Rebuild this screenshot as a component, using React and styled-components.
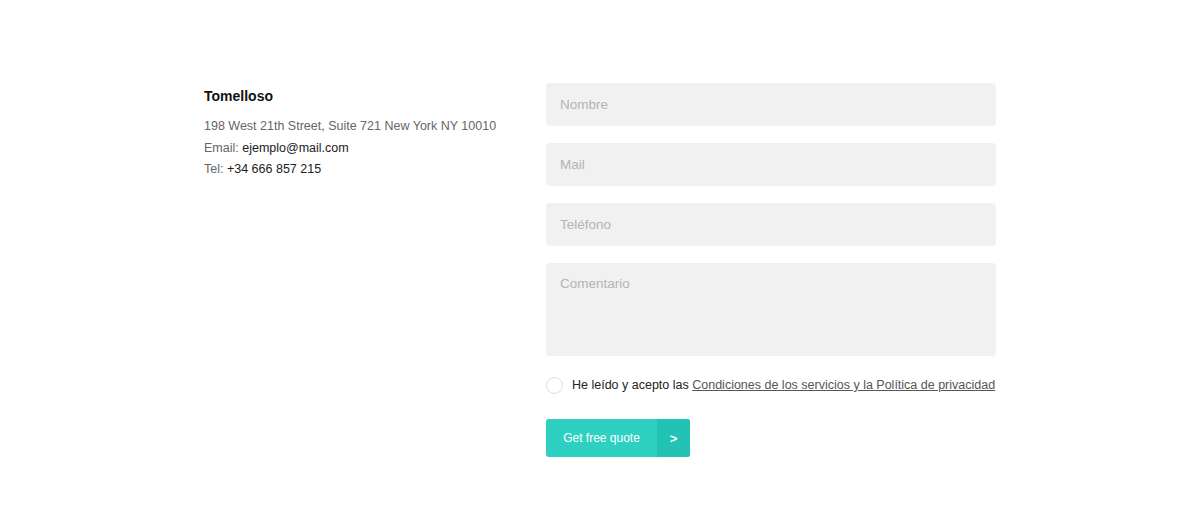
import React from 'react';
import styled, { createGlobalStyle } from 'styled-components';

const GlobalStyle = createGlobalStyle`
  body {
    margin: 0;
    font-family: 'Liberation Sans', Arial, sans-serif;
    background: #fff;
    color: #222;
  }
`;

const Section = styled.div`
  width: 792px;
  margin: 0 auto;
  padding-top: 83px;
  display: grid;
  grid-template-columns: 342px 450px;
`;

const Info = styled.div`
  padding-top: 4px;
`;

const Title = styled.h3`
  margin: 0 0 11px 0;
  font-size: 14px;
  font-weight: bold;
  color: #111;
  line-height: 18px;
`;

const Line = styled.div`
  font-size: 12.5px;
  line-height: 21.5px;
  color: #666;
  white-space: nowrap;
`;

const Value = styled.span`
  color: #222;
`;

const Form = styled.form`
  display: flex;
  flex-direction: column;
  gap: 17px;
`;

const Input = styled.input`
  box-sizing: border-box;
  width: 100%;
  height: 43px;
  border: none;
  border-radius: 4px;
  background: #f1f1f1;
  padding: 0 14px;
  font-family: inherit;
  font-size: 13.5px;
  color: #333;
  outline: none;
  &::placeholder {
    color: #b4b4b4;
  }
`;

const TextArea = styled.textarea`
  box-sizing: border-box;
  width: 100%;
  height: 93px;
  border: none;
  border-radius: 4px;
  background: #f1f1f1;
  padding: 13px 14px;
  font-family: inherit;
  font-size: 13.5px;
  color: #333;
  resize: none;
  outline: none;
  &::placeholder {
    color: #b4b4b4;
  }
`;

const CheckRow = styled.label`
  display: flex;
  align-items: center;
  gap: 9px;
  font-size: 12.5px;
  line-height: 17px;
  color: #222;
  margin-top: 4px;
  white-space: nowrap;
`;

const Circle = styled.span`
  box-sizing: border-box;
  width: 17px;
  height: 17px;
  border-radius: 50%;
  border: 1px solid #ddd;
  background: #fff;
  flex-shrink: 0;
`;

const Link = styled.a`
  color: #555;
  text-decoration: underline;
`;

const Button = styled.button`
  align-self: flex-start;
  display: flex;
  height: 38px;
  padding: 0;
  border: none;
  border-radius: 3px;
  overflow: hidden;
  background: #2ed0c1;
  color: #fff;
  font-family: inherit;
  font-size: 12px;
  cursor: pointer;
  margin-top: 8px;
`;

const ButtonLabel = styled.span`
  display: flex;
  align-items: center;
  justify-content: center;
  width: 111px;
  white-space: nowrap;
`;

const Arrow = styled.span`
  display: flex;
  align-items: center;
  justify-content: center;
  width: 33px;
  background: #22c2b4;
  font-size: 13px;
  font-weight: bold;
`;

export default function App() {
  return (
    <>
      <GlobalStyle />
      <Section>
        <Info>
          <Title>Tomelloso</Title>
          <Line>198 West 21th Street, Suite 721 New York NY 10010</Line>
          <Line>Email: <Value>ejemplo@mail.com</Value></Line>
          <Line>Tel: <Value>+34 666 857 215</Value></Line>
        </Info>
        <Form onSubmit={(e) => e.preventDefault()}>
          <Input placeholder="Nombre" />
          <Input placeholder="Mail" />
          <Input placeholder="Teléfono" />
          <TextArea placeholder="Comentario" />
          <CheckRow>
            <Circle />
            <span>
              He leído y acepto las <Link href="#">Condiciones de los servicios y la Política de privacidad</Link>
            </span>
          </CheckRow>
          <Button type="submit">
            <ButtonLabel>Get free quote</ButtonLabel>
            <Arrow>&gt;</Arrow>
          </Button>
        </Form>
      </Section>
    </>
  );
}
